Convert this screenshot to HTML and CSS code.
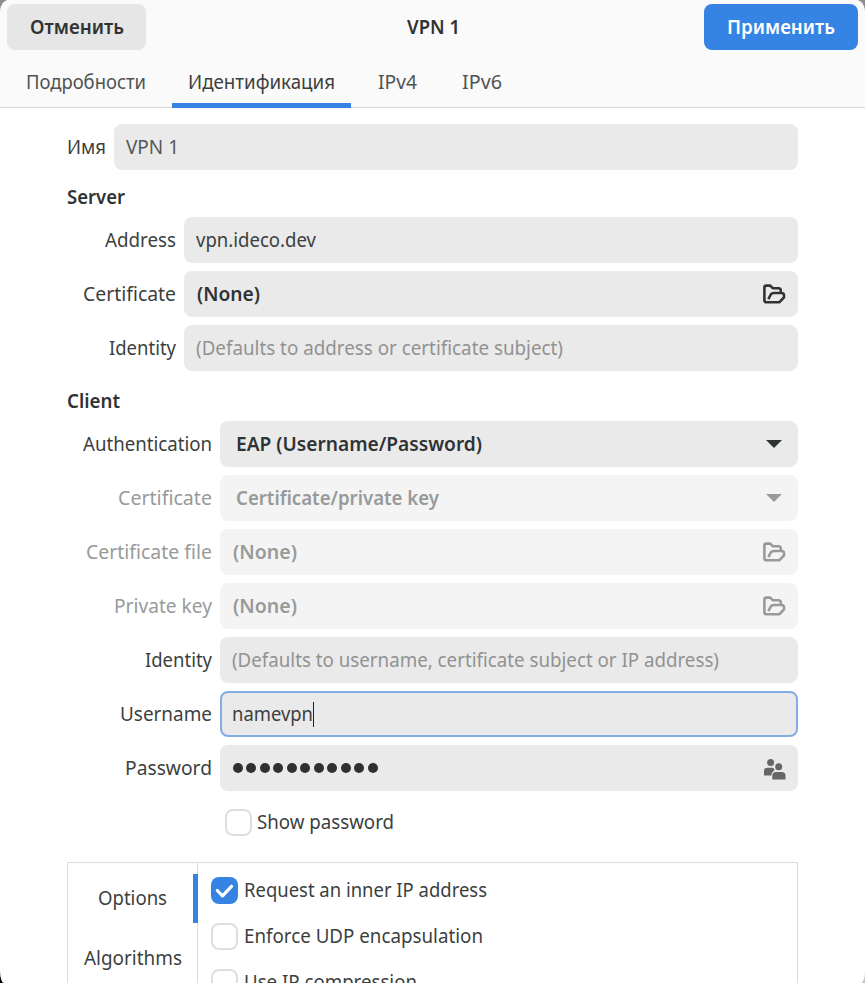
FILE: index.html
```html
<!DOCTYPE html>
<html lang="ru">
<head>
<meta charset="utf-8">
<title>VPN 1</title>
<link rel="stylesheet" href="styles.css">
</head>
<body>
<svg class="defs" aria-hidden="true">
  <symbol id="folder" viewBox="0 0 24 22">
    <path d="M4.6 19.2H17.5L22 14.3V12.4Q22 10 19.6 10H12Q9.4 10 8.5 12L6.4 16.2M4.6 19.2Q2.4 19.2 2.4 17.2V4.6Q2.4 2.6 4.4 2.6H8.2L10.7 5.2H16.4Q18.8 5.2 18.8 7.5V9.5" fill="none" stroke="currentColor" stroke-width="2.6" stroke-linejoin="round"/>
  </symbol>
</svg>
<div class="window">
  <header class="header">
    <button class="btn cancel"><span data-w="93">Отменить</span></button>
    <h1 class="title"><span data-w="52">VPN 1</span></h1>
    <button class="btn apply"><span data-w="107">Применить</span></button>
  </header>
  <nav class="tabs">
    <a class="tab details"><span data-w="119">Подробности</span></a>
    <a class="tab identity active"><span data-w="146">Идентификация</span></a>
    <a class="tab ipv4"><span data-w="38">IPv4</span></a>
    <a class="tab ipv6"><span data-w="39">IPv6</span></a>
  </nav>
  <main class="content">
    <div class="row name"><label><span data-w="38">Имя</span></label><div class="field"><span class="soft" data-w="52">VPN 1</span></div></div>
    <h2 class="h-server"><span data-w="57">Server</span></h2>
    <section class="group server">
      <div class="row"><label><span data-w="70">Address</span></label><div class="field"><span data-w="119">vpn.ideco.dev</span></div></div>
      <div class="row"><label><span data-w="92">Certificate</span></label><div class="field file"><span data-w="62">(None)</span><svg class="folder"><use href="#folder"/></svg></div></div>
      <div class="row"><label><span data-w="66">Identity</span></label><div class="field"><span class="hint" data-w="366">(Defaults to address or certificate subject)</span></div></div>
    </section>
    <h2 class="h-client"><span data-w="52">Client</span></h2>
    <section class="group client">
      <div class="row"><label><span data-w="128">Authentication</span></label><div class="field combo"><span data-w="245">EAP (Username/Password)</span><svg class="arrow" viewBox="0 0 16 8"><path d="M0 0H16L8 8Z"/></svg></div></div>
      <div class="row off"><label><span data-w="93">Certificate</span></label><div class="field combo"><span data-w="202">Certificate/private key</span><svg class="arrow" viewBox="0 0 16 8"><path d="M0 0H16L8 8Z"/></svg></div></div>
      <div class="row off"><label><span data-w="125">Certificate file</span></label><div class="field file"><span data-w="63">(None)</span><svg class="folder"><use href="#folder"/></svg></div></div>
      <div class="row off"><label><span data-w="97">Private key</span></label><div class="field file"><span data-w="63">(None)</span><svg class="folder"><use href="#folder"/></svg></div></div>
      <div class="row"><label><span data-w="66">Identity</span></label><div class="field"><span class="hint" data-w="486">(Defaults to username, certificate subject or IP address)</span></div></div>
      <div class="row"><label><span data-w="91">Username</span></label><div class="field focus"><span data-w="80">namevpn</span><i class="caret"></i></div></div>
      <div class="row"><label><span data-w="86">Password</span></label><div class="field"><div class="dots"><i></i><i></i><i></i><i></i><i></i><i></i><i></i><i></i><i></i><i></i><i></i></div>
        <svg class="people" viewBox="0 0 22 21"><circle cx="6.6" cy="3.6" r="3.5"/><circle cx="14.7" cy="7.8" r="3.5"/><path d="M0 16.5V12Q0 8.7 3.3 8.7H8Q9.4 8.7 10.2 10Q11 11.2 9.6 12Q7.5 13.2 7.2 16.5ZM8.3 20.5V16.7Q8.3 13 12 13H17.8Q21.5 13 21.5 16.7V20.5Z"/></svg></div></div>
    </section>
    <div class="show"><i class="check"></i><span data-w="136">Show password</span></div>
    <section class="notebook">
      <div class="side">
        <div class="item active"><span data-w="68">Options</span></div>
        <div class="item"><span data-w="97">Algorithms</span></div>
      </div>
      <div class="options">
        <div class="opt"><i class="check on"><svg viewBox="0 0 27 27"><path d="M6.3 13.5L11.5 18.8L20.5 9.3" fill="none" stroke="#fff" stroke-width="3.2" stroke-linecap="round" stroke-linejoin="round"/></svg></i><span data-w="242">Request an inner IP address</span></div>
        <div class="opt"><i class="check"></i><span data-w="238">Enforce UDP encapsulation</span></div>
        <div class="opt"><i class="check"></i><span data-w="172">Use IP compression</span></div>
      </div>
    </section>
  </main>
</div>
<script src="fit.js"></script>
</body>
</html>
```
FILE: styles.css
```css
* { box-sizing: border-box; }
html, body { margin: 0; height: 100%; overflow: hidden; }
body { background: linear-gradient(#8c8c8c 0 50%, transparent 50%), linear-gradient(90deg, #000 50%, #c4c4c4 50%); font: 20px/28px "Noto Sans", "Open Sans", sans-serif; color: #3c3f40; }
.defs { position: absolute; width: 0; height: 0; }
.window { height: 983px; overflow: hidden; background: #fff; border-radius: 9px 9px 4px 4px / 12px 12px 12px 12px; }
[data-w] { display: inline-block; flex: none; white-space: nowrap; }
[data-w] > b { display: inline-block; font-weight: inherit; transform-origin: 0 50%; }
.header { height: 58px; padding: 4px 7px 8px; display: grid; grid-template-columns: 139px 1fr 154px; background: #fafafa; }
.btn { height: 46px; padding: 0; border: 0; border-radius: 8px; background: #e6e6e6; font: inherit; font-weight: 600; color: #303334; }
.btn.apply { background: #3584e4; color: #fff; }
.title { margin: 0; padding: 9px 0 0 261px; font: inherit; font-weight: 600; color: #303334; }
.tabs { height: 50px; display: flex; background: #fafafa; border-bottom: 1px solid #d5d5d5; color: #505354; }
.tab { height: 50px; padding-top: 10px; }
.details { width: 172px; padding-left: 26px; }
.identity { width: 179px; padding-left: 16px; border-bottom: 5px solid #3584e4; color: #3c3f40; }
.ipv4 { width: 111px; padding-left: 27px; }
.content { padding: 16px 67px 0; }
.row { display: flex; align-items: center; height: 46px; }
.row label { flex: none; width: 109px; margin-right: 8px; text-align: right; height: 28px; }
.name label { width: 39px; text-align: left; }
.client .row label { width: 144.5px; }
.group { display: grid; gap: 8px; }
h2 { margin: 0; font: inherit; font-weight: 600; color: #303334; }
.h-server { padding-top: 13px; height: 47px; }
.h-client { padding-top: 16px; height: 50px; }
.field { flex: 1; height: 46px; padding: 0 12px; display: flex; align-items: center; border-radius: 8px; background: #eaeaea; }
.soft { color: #555859; }
.hint { color: #929292; }
.file, .combo { padding: 0 12px 0 13px; font-weight: 600; color: #303334; }
.combo { padding: 0 16px; }
.field svg { margin-left: auto; display: block; fill: currentColor; }
.folder { width: 24px; height: 22px; }
.arrow { width: 16px; height: 8px; }
.people { width: 22px; height: 21px; color: #666; position: relative; top: 1px; }
.off label { color: #989a9a; }
.off .field { background: #f4f4f4; color: #989a9a; }
.field.focus { border: 2px solid #81ade4; padding: 0 10px; }
.caret { width: 1px; height: 25px; margin-left: 0; background: #222; }
.dots { display: flex; gap: 3.5px; padding-left: 1px; }
.dots i { width: 10px; height: 10px; border-radius: 50%; background: #2e3132; }
.show { display: flex; align-items: center; margin: 17px 0 0 158px; height: 28px; gap: 5px; }
.check { flex: none; width: 27px; height: 27px; border: 2px solid #dedede; border-radius: 8px; background: #fff; }
.check.on { border: 0; background: #3584e4; }
.check svg { display: block; width: 27px; height: 27px; }
.notebook { display: flex; height: 160px; margin-top: 26px; border: 1px solid #dcdcdc; }
.side { flex: none; width: 130px; padding-top: 11px; border-right: 1px solid #dcdcdc; }
.item { display: flex; align-items: center; justify-content: center; height: 49px; margin: 0 -1px 11px 0; padding: 0 0 2px 4px; border-right: 5px solid transparent; }
.item.active { border-color: #3584e4; }
.options { padding: 4px 0 0 13px; }
.opt { display: flex; align-items: center; height: 46px; gap: 6px; }
```
FILE: fit.js
```js
document.querySelectorAll('[data-w]').forEach(function (el) {
  var inner = document.createElement('b');
  inner.textContent = el.textContent;
  el.textContent = '';
  el.appendChild(inner);
  var w = Number(el.dataset.w) + 1;
  var natural = inner.getBoundingClientRect().width;
  inner.style.transform = 'scaleX(' + w / natural + ')';
  inner.style.marginRight = (w - natural) + 'px';
  el.style.width = w + 'px';
});
```
